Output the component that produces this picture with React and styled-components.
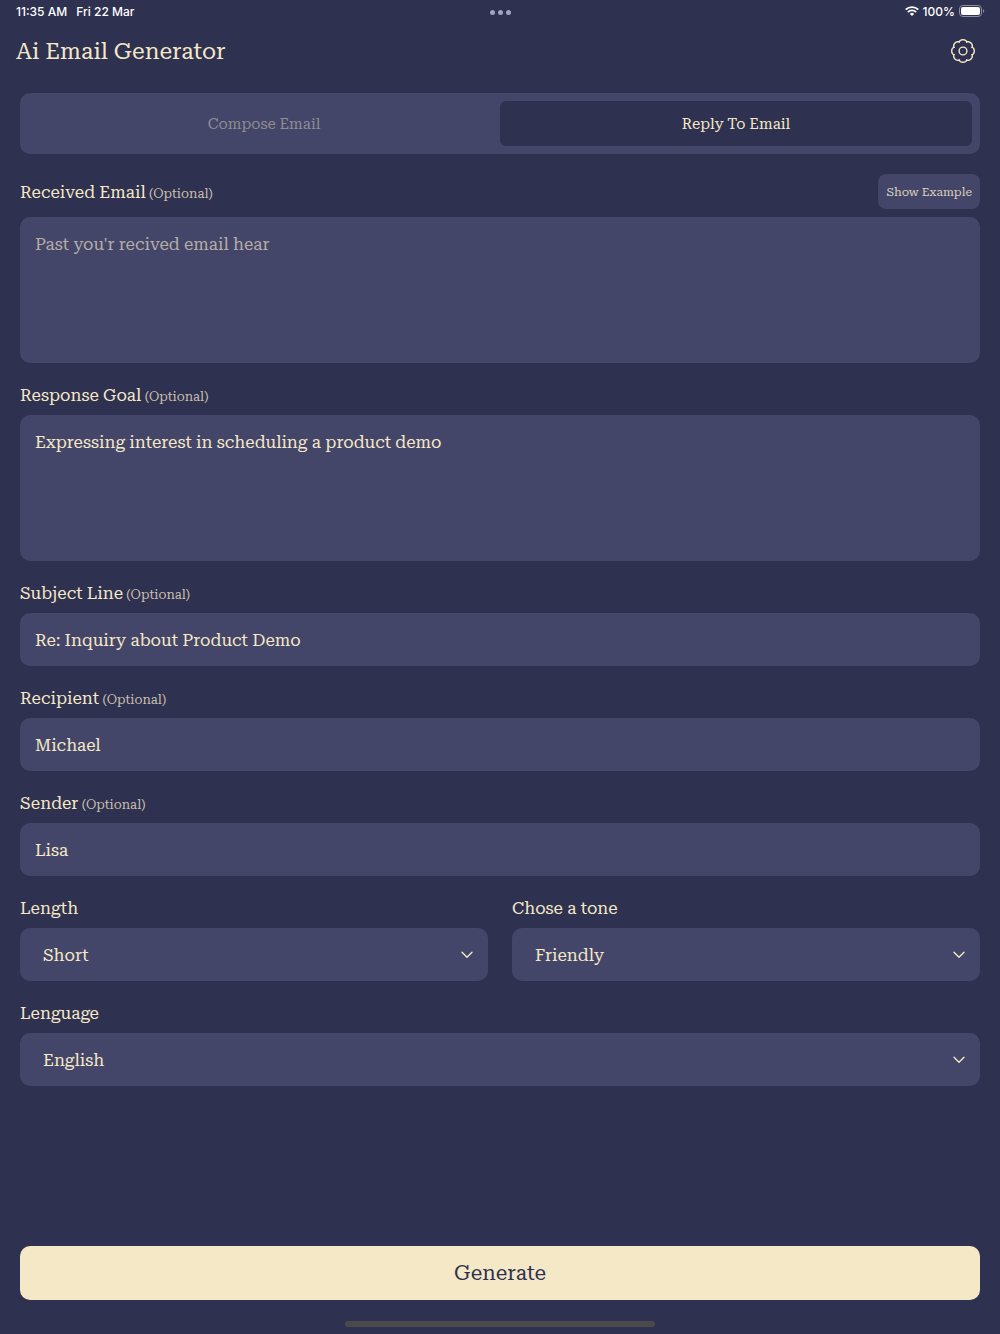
import { useState } from "react";
import styled, { createGlobalStyle, ThemeProvider } from "styled-components";

const theme = {
   colors: {
      background: "#2e3150",
      surface: "#444669",
      primary: "#f5e8c7",
      muted: "#8f8c92",
      placeholder: "#b5ada6",
      white: "#ffffff",
   },
};

const Field = ({ id, label, optional, action, children }) => (
   <FieldWrapper>
      <LabelRow>
         <label htmlFor={id}>
            {label}
            {optional && <small> (Optional)</small>}
         </label>
         {action}
      </LabelRow>
      {children}
   </FieldWrapper>
);

const Select = ({ id, options }) => (
   <SelectWrapper>
      <select id={id} defaultValue={options[0]}>
         {options.map((option) => (
            <option key={option}>{option}</option>
         ))}
      </select>
      <svg viewBox="0 0 12 8" aria-hidden="true">
         <path d="M1 1.2 6 6.2 11 1.2" />
      </svg>
   </SelectWrapper>
);

// eight round lobes around the centre
const gearPoints = Array.from({ length: 128 }, (_, i) => {
   const angle = (i / 128) * Math.PI * 2;
   const radius = 9.5 + 1.8 * Math.sqrt(Math.abs(Math.cos(angle * 4)));
   return `${(12 + radius * Math.sin(angle)).toFixed(2)},${(12 - radius * Math.cos(angle)).toFixed(2)}`;
}).join(" ");

const GearIcon = () => (
   <svg viewBox="0 0 24 24" aria-hidden="true">
      <polygon points={gearPoints} />
      <circle cx="12" cy="12" r="3.9" />
   </svg>
);

const WifiIcon = () => (
   <svg width="14" height="10" viewBox="0 0 14 10" aria-hidden="true">
      <g fill="none" stroke="#fff" strokeWidth="1.9">
         <path d="M.7 3.7a8.9 8.9 0 0 1 12.600 0" />
         <path d="M2.900 6.1a5.800 5.800 0 0 1 8.200 0" />
      </g>
      <path d="M7 10 4.900 7.900a3 3 0 0 1 4.200 0Z" fill="#fff" />
   </svg>
);

const BatteryIcon = () => (
   <svg width="26" height="12" viewBox="0 0 26 12" aria-hidden="true">
      <rect x=".5" y=".5" width="22" height="11" rx="3.4" fill="none" stroke="#8d8fa4" />
      <rect x="2" y="2" width="19" height="8" rx="2" fill="#fff" />
      <path d="M24 4.2v3.6c.8-.3 1.2-1 1.2-1.8s-.4-1.5-1.2-1.8Z" fill="#8d8fa4" />
   </svg>
);

const App = () => {
   const [tab, setTab] = useState("reply");

   return (
      <ThemeProvider theme={theme}>
         <GlobalStyle />
         <Page>
            <StatusBar>
               <div>
                  <span>11:35 AM</span>
                  <span>Fri 22 Mar</span>
               </div>
               <Dots>
                  <i />
                  <i />
                  <i />
               </Dots>
               <StatusIcons>
                  <WifiIcon />
                  <span>100%</span>
                  <BatteryIcon />
               </StatusIcons>
            </StatusBar>

            <Header>
               <h1>Ai Email Generator</h1>
               <button type="button" aria-label="Settings">
                  <GearIcon />
               </button>
            </Header>

            <Form onSubmit={(e) => e.preventDefault()}>
               <Tabs>
                  <Tab type="button" $active={tab === "compose"} onClick={() => setTab("compose")}>
                     Compose Email
                  </Tab>
                  <Tab type="button" $active={tab === "reply"} onClick={() => setTab("reply")}>
                     Reply To Email
                  </Tab>
               </Tabs>

               <Field
                  id="received"
                  label="Received Email"
                  optional
                  action={<ExampleButton type="button">Show Example</ExampleButton>}
               >
                  <TextArea id="received" placeholder="Past you'r recived email hear" />
               </Field>
               <Field id="goal" label="Response Goal" optional>
                  <TextArea id="goal" defaultValue="Expressing interest in scheduling a product demo" />
               </Field>
               <Field id="subject" label="Subject Line" optional>
                  <Input id="subject" defaultValue="Re: Inquiry about Product Demo" />
               </Field>
               <Field id="recipient" label="Recipient" optional>
                  <Input id="recipient" defaultValue="Michael" />
               </Field>
               <Field id="sender" label="Sender" optional>
                  <Input id="sender" defaultValue="Lisa" />
               </Field>
               <Columns>
                  <Field id="length" label="Length">
                     <Select id="length" options={["Short", "Medium", "Long"]} />
                  </Field>
                  <Field id="tone" label="Chose a tone">
                     <Select id="tone" options={["Friendly", "Formal", "Casual"]} />
                  </Field>
               </Columns>
               <Field id="language" label="Lenguage">
                  <Select id="language" options={["English", "Spanish", "French"]} />
               </Field>

               <GenerateButton type="submit">Generate</GenerateButton>
            </Form>
            <HomeIndicator />
         </Page>
      </ThemeProvider>
   );
};

export default App;

//style

const GlobalStyle = createGlobalStyle`
   * {
      box-sizing: border-box;
   }

   body {
      margin: 0;
      background: ${theme.colors.background};
   }

   body, button, input, textarea, select {
      font-family: "Roboto Slab", "RobotoSlab", "Roboto Slab Variable", "Roboto Serif", "DejaVu Serif", serif;
      color: ${theme.colors.primary};
   }

   button {
      border: none;
      padding: 0;
      background: none;
      cursor: pointer;
   }
`;

const Page = styled.div`
   display: flex;
   flex-direction: column;
   min-height: 100vh;
`;

const StatusBar = styled.div`
   display: grid;
   grid-template-columns: 1fr auto 1fr;
   align-items: center;
   height: 24px;
   padding: 0 15px 2px 16px;
   font-family: Inter, sans-serif;
   font-size: 12px;
   font-weight: 500;
   color: ${({ theme }) => theme.colors.white};

   > div {
      display: flex;
      gap: 9px;
   }
`;

const Dots = styled.div`
   && {
      gap: 3px;
      padding-top: 2px;
   }

   i {
      width: 5px;
      height: 5px;
      border-radius: 50%;
      background: #a3a4c4;
   }
`;

const StatusIcons = styled.div`
   && {
      justify-content: flex-end;
      align-items: center;
      gap: 4px;
   }
`;

const Header = styled.header`
   display: flex;
   justify-content: space-between;
   align-items: center;
   height: 54px;
   padding: 0 25px 0 16px;

   h1 {
      margin: 0;
      font-size: 23px;
      font-weight: 400;
   }

   button,
   svg {
      display: block;
      width: 24px;
      height: 24px;
   }

   svg {
      fill: none;
      stroke: ${({ theme }) => theme.colors.primary};
      stroke-width: 1.4;
      stroke-linejoin: round;
   }
`;

const Form = styled.form`
   flex: 1;
   display: flex;
   flex-direction: column;
   gap: 20px;
   padding: 15px 20px 0;
`;

const Tabs = styled.div`
   display: flex;
   height: 61px;
   padding: 8px;
   border-radius: 10px;
   background: ${({ theme }) => theme.colors.surface};
`;

const Tab = styled.button`
   flex: 1;
   border-radius: 6px;
   font-size: 15px;

   && {
      background: ${({ theme, $active }) => ($active ? theme.colors.background : "transparent")};
      color: ${({ theme, $active }) => ($active ? theme.colors.primary : theme.colors.muted)};
   }
`;

const FieldWrapper = styled.div`
   display: flex;
   flex-direction: column;
   gap: 8px;
`;

const LabelRow = styled.div`
   display: flex;
   justify-content: space-between;
   align-items: center;
   font-size: 17px;
   line-height: 24px;

   small {
      font-size: 13px;
      line-height: 1;
      color: #c9bfae;
   }
`;

const ExampleButton = styled.button`
   height: 35px;
   padding: 0 8px;
   border-radius: 8px;
   font-size: 12px;

   && {
      background: ${({ theme }) => theme.colors.surface};
      color: #dcd1bb;
   }
`;

const Input = styled.input`
   display: block;
   width: 100%;
   height: 53px;
   padding: 0 15px;
   border: none;
   border-radius: 10px;
   outline: none;
   font-size: 17px;
   background: ${({ theme }) => theme.colors.surface};

   &::placeholder {
      color: ${({ theme }) => theme.colors.placeholder};
      opacity: 1;
   }
`;

const TextArea = styled(Input).attrs({ as: "textarea" })`
   height: 146px;
   padding: 15px;
   line-height: 24px;
   resize: none;
`;

const SelectWrapper = styled.div`
   display: grid;
   align-items: center;

   select,
   svg {
      grid-area: 1 / 1;
   }

   select {
      appearance: none;
      width: 100%;
      height: 53px;
      padding: 0 40px 0 23px;
      border: none;
      border-radius: 10px;
      outline: none;
      font-size: 17px;
      background: ${({ theme }) => theme.colors.surface};
   }

   svg {
      justify-self: end;
      width: 12px;
      height: 8px;
      margin-right: 15px;
      fill: none;
      stroke: ${({ theme }) => theme.colors.primary};
      stroke-width: 1.4;
      stroke-linecap: round;
      stroke-linejoin: round;
      pointer-events: none;
   }
`;

const Columns = styled.div`
   display: grid;
   grid-template-columns: 1fr 1fr;
   gap: 24px;
`;

const GenerateButton = styled.button`
   height: 54px;
   margin-top: auto;
   border-radius: 10px;
   font-size: 21px;

   && {
      background: ${({ theme }) => theme.colors.primary};
      color: ${({ theme }) => theme.colors.background};
   }
`;

const HomeIndicator = styled.div`
   width: 31%;
   height: 6px;
   margin: 21px auto 7px;
   border-radius: 3px;
   background: #4a4a4a;
`;
